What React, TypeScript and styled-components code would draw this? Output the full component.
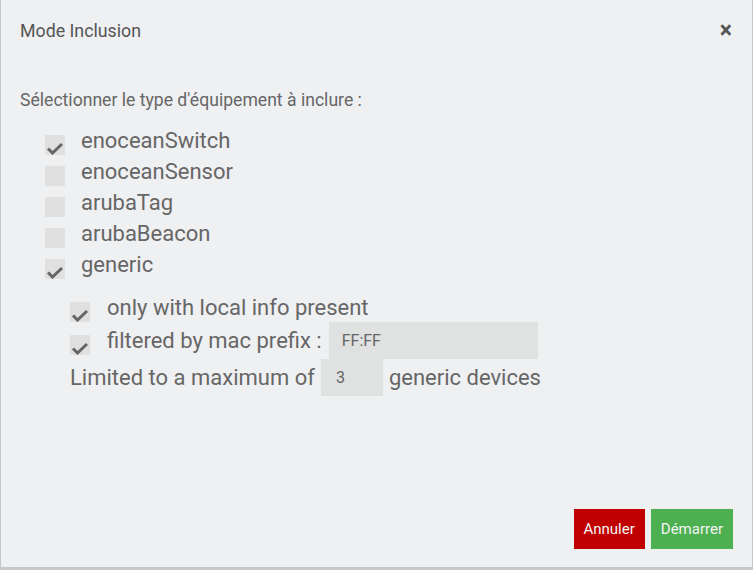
import React from 'react';
import styled, { createGlobalStyle } from 'styled-components';

const GlobalStyle = createGlobalStyle`
  html, body {
    margin: 0;
    padding: 0;
    background: #c6c7c8;
  }
  body {
    font-family: Roboto, "Liberation Sans", sans-serif;
  }
`;

const DialogTag = styled.div`
  box-sizing: border-box;
  width: 751px;
  height: 567px;
  margin-left: 1px;
  background: #eff0f2;
  display: flex;
  flex-direction: column;
  color: #666;
`;

const HeaderTag = styled.div`
  display: flex;
  align-items: center;
  justify-content: space-between;
  height: 60px;
  padding: 0 20px 0 19px;
`;

const TitleTag = styled.span`
  font-size: 17.8px;
  color: #555;
`;

const CloseTag = styled.span`
  font-size: 23px;
  font-weight: bold;
  color: #555;
  line-height: 1;
  cursor: pointer;
`;

const BodyTag = styled.div`
  flex: 1;
  padding: 30px 19px 0;
`;

const IntroTag = styled.div`
  font-size: 17.6px;
  line-height: 20px;
  margin-bottom: 15px;
`;

const ListTag = styled.div`
  display: flex;
  flex-direction: column;
  padding-left: 25px;
`;

const RowTag = styled.label`
  display: flex;
  align-items: center;
  height: 31px;
  font-size: 22px;
  gap: 16px;
`;

const BoxTag = styled.span`
  width: 20px;
  height: 20px;
  background: #e0e0e0;
  display: inline-flex;
  align-items: flex-end;
  justify-content: center;
  margin-top: 9px;
  flex-shrink: 0;
`;

const SubListTag = styled.div`
  display: flex;
  flex-direction: column;
  padding-left: 25px;
  margin-top: 13px;
`;

const SubRowTag = styled.div<{ $height: number }>`
  display: flex;
  align-items: center;
  font-size: 22px;
  height: ${({ $height }) => $height}px;
  gap: 17px;
`;

const LimitRowTag = styled.div`
  display: flex;
  align-items: center;
  font-size: 22px;
  height: 37px;
  gap: 6px;
`;

const InputTag = styled.input<{ $width: number; $pad: number }>`
  box-sizing: border-box;
  width: ${({ $width }) => $width}px;
  height: 37px;
  border: none;
  outline: none;
  background: #e0e1e1;
  color: #666;
  font-family: Roboto, "Liberation Sans", sans-serif;
  font-size: 16px;
  padding: 0 ${({ $pad }) => $pad}px;
`;

const FooterTag = styled.div`
  display: flex;
  justify-content: flex-end;
  gap: 6px;
  padding: 0 19px 18px 0;
`;

const ButtonTag = styled.button<{ $color: string }>`
  height: 40px;
  border: none;
  padding: 0 10px;
  background: ${({ $color }) => $color};
  color: #f4f4f4;
  font-family: Roboto, "Liberation Sans", sans-serif;
  font-size: 15px;
  cursor: pointer;
`;

const Check = () => (
  <svg width="18" height="14" viewBox="0 0 18 14">
    <path d="M2 7.5 L6.5 12 L16 3" fill="none" stroke="#666" strokeWidth="3" />
  </svg>
);

const TYPES = [
  { name: 'enoceanSwitch', checked: true },
  { name: 'enoceanSensor', checked: false },
  { name: 'arubaTag', checked: false },
  { name: 'arubaBeacon', checked: false },
  { name: 'generic', checked: true },
];

export default function App() {
  return (
    <>
      <GlobalStyle />
      <DialogTag>
        <HeaderTag>
          <TitleTag>Mode Inclusion</TitleTag>
          <CloseTag>×</CloseTag>
        </HeaderTag>
        <BodyTag>
          <IntroTag>Sélectionner le type d'équipement à inclure :</IntroTag>
          <ListTag>
            {TYPES.map((t) => (
              <RowTag key={t.name}>
                <BoxTag>{t.checked && <Check />}</BoxTag>
                {t.name}
              </RowTag>
            ))}
            <SubListTag>
              <SubRowTag $height={29}>
                <BoxTag>
                  <Check />
                </BoxTag>
                only with local info present
              </SubRowTag>
              <SubRowTag $height={37}>
                <BoxTag>
                  <Check />
                </BoxTag>
                filtered by mac prefix :
                <InputTag $width={209} $pad={13} defaultValue="FF:FF" style={{ marginLeft: -10 }} />
              </SubRowTag>
              <LimitRowTag>
                Limited to a maximum of
                <InputTag $width={62} $pad={15} defaultValue="3" />
                generic devices
              </LimitRowTag>
            </SubListTag>
          </ListTag>
        </BodyTag>
        <FooterTag>
          <ButtonTag $color="#c00000">Annuler</ButtonTag>
          <ButtonTag $color="#4caf50">Démarrer</ButtonTag>
        </FooterTag>
      </DialogTag>
    </>
  );
}
